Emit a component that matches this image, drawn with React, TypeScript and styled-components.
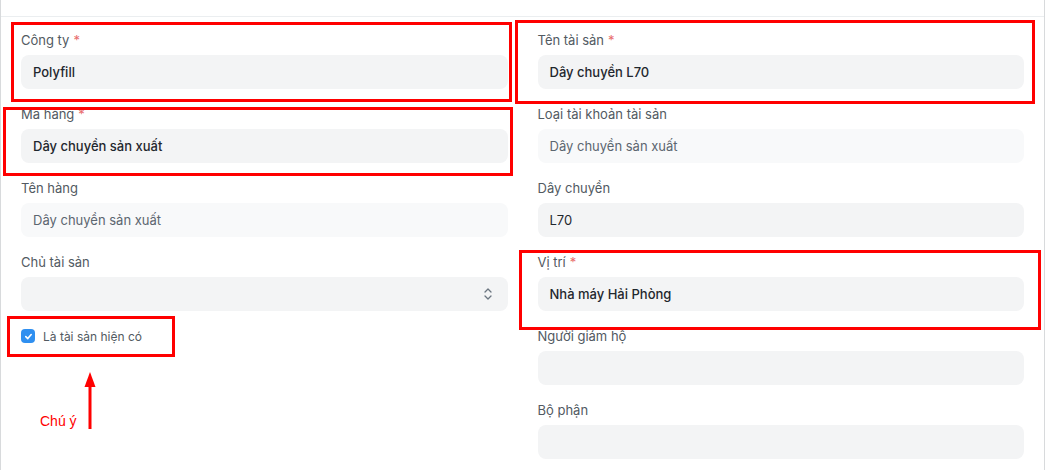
import React from "react";
import styled, { createGlobalStyle } from "styled-components";

const GlobalStyle = createGlobalStyle`
  html, body { margin: 0; padding: 0; background: #ffffff; }
  body { font-family: Inter, "Noto Sans", sans-serif; -webkit-font-smoothing: antialiased; }
  * { box-sizing: border-box; }
`;

const Page = styled.div`
  position: relative;
  width: 1048px;
  height: 470px;
  overflow: hidden;
  background: #ffffff;
`;

const Panel = styled.div`
  width: 1045px;
  height: 470px;
  border-left: 1px solid #d8dadc;
  border-right: 1px solid #d8dadc;
  padding-top: 16px;
`;

const Section = styled.section`
  border-top: 1px solid #ebeef0;
  padding: 14px 20px 0 20px;
  display: grid;
  grid-template-columns: 1fr 1fr;
  column-gap: 30px;
`;

const Column = styled.div`
  display: flex;
  flex-direction: column;
`;

const Field = styled.div`
  display: flex;
  flex-direction: column;
  margin-bottom: 16px;
`;

const Label = styled.label`
  font-size: 13px;
  line-height: 18px;
  height: 18px;
  color: #525a62;
  margin-bottom: 6px;
`;

const Req = styled.span`
  color: #e86c6c;
  margin-left: 4px;
`;

const Input = styled.div<{ $readOnly?: boolean; $plain?: boolean }>`
  height: 34px;
  border-radius: 8px;
  background: ${(p) => (p.$readOnly ? "#f8f9fa" : "#f3f4f5")};
  padding: 0 12px;
  display: flex;
  align-items: center;
  justify-content: space-between;
  font-size: 13px;
  font-weight: ${(p) => (p.$readOnly || p.$plain ? 400 : 500)};
  color: ${(p) => (p.$readOnly ? "#5c6670" : "#1f272e")};
`;

const SelectArrow = styled.svg`
  width: 10px;
  height: 14px;
  margin-right: 3px;
`;

const CheckRow = styled.div`
  display: flex;
  align-items: center;
  height: 18px;
  gap: 8px;
`;

const CheckBox = styled.span`
  width: 14px;
  height: 14px;
  border-radius: 4px;
  background: #2f8ff0;
  display: flex;
  align-items: center;
  justify-content: center;
`;

const CheckLabel = styled.span`
  font-size: 12px;
  color: #525a62;
`;

const Annot = styled.div<{ $l: number; $t: number; $w: number; $h: number }>`
  position: absolute;
  left: ${(p) => p.$l}px;
  top: ${(p) => p.$t}px;
  width: ${(p) => p.$w}px;
  height: ${(p) => p.$h}px;
  border: 3px solid #ff0000;
  pointer-events: none;
`;

const Arrow = styled.svg`
  position: absolute;
  left: 83px;
  top: 372px;
  width: 14px;
  height: 58px;
`;

const Note = styled.span`
  position: absolute;
  left: 40px;
  top: 412px;
  font-family: "Liberation Sans", Arial, sans-serif;
  font-size: 14px;
  line-height: 18px;
  color: #ff0000;
`;

type F = { label: string; value?: string; req?: boolean; ro?: boolean; plain?: boolean; select?: boolean };

const left: F[] = [
  { label: "Công ty", value: "Polyfill", req: true },
  { label: "Mã hàng", value: "Dây chuyền sản xuất", req: true },
  { label: "Tên hàng", value: "Dây chuyền sản xuất", ro: true },
  { label: "Chủ tài sản", select: true },
];

const right: F[] = [
  { label: "Tên tài sản", value: "Dây chuyền L70", req: true },
  { label: "Loại tài khoản tài sản", value: "Dây chuyền sản xuất", ro: true },
  { label: "Dây chuyền", value: "L70", plain: true },
  { label: "Vị trí", value: "Nhà máy Hải Phòng", req: true },
  { label: "Người giám hộ" },
  { label: "Bộ phận" },
];

function FieldView({ f }: { f: F }) {
  return (
    <Field>
      <Label>
        {f.label}
        {f.req && <Req>*</Req>}
      </Label>
      <Input $readOnly={f.ro} $plain={f.plain}>
        <span>{f.value ?? ""}</span>
        {f.select && (
          <SelectArrow viewBox="0 0 10 14" fill="none" stroke="#6b7580" strokeWidth="1.3" strokeLinecap="round" strokeLinejoin="round">
            <path d="M2 5 L5 2 L8 5" />
            <path d="M2 9 L5 12 L8 9" />
          </SelectArrow>
        )}
      </Input>
    </Field>
  );
}

export default function App() {
  return (
    <>
      <GlobalStyle />
      <Page>
        <Panel>
          <Section>
            <Column>
              {left.map((f) => (
                <FieldView key={f.label} f={f} />
              ))}
              <CheckRow>
                <CheckBox>
                  <svg width="9" height="9" viewBox="0 0 10 10" fill="none" stroke="#fff" strokeWidth="1.8" strokeLinecap="round" strokeLinejoin="round">
                    <path d="M2 5.2 L4.2 7.3 L8 2.8" />
                  </svg>
                </CheckBox>
                <CheckLabel>Là tài sản hiện có</CheckLabel>
              </CheckRow>
            </Column>
            <Column>
              {right.map((f) => (
                <FieldView key={f.label} f={f} />
              ))}
            </Column>
          </Section>
        </Panel>

        <Annot $l={11} $t={22} $w={501} $h={80} />
        <Annot $l={3} $t={107} $w={510} $h={69} />
        <Annot $l={515} $t={20} $w={520} $h={84} />
        <Annot $l={519} $t={250} $w={522} $h={80} />
        <Annot $l={7} $t={316} $w={168} $h={41} />

        <Arrow viewBox="0 0 14 58">
          <polygon points="7,0 1.5,15 12.5,15" fill="#ff0000" />
          <rect x="5.5" y="12" width="3" height="45" fill="#ff0000" />
        </Arrow>
        <Note>Chú ý</Note>
      </Page>
    </>
  );
}
